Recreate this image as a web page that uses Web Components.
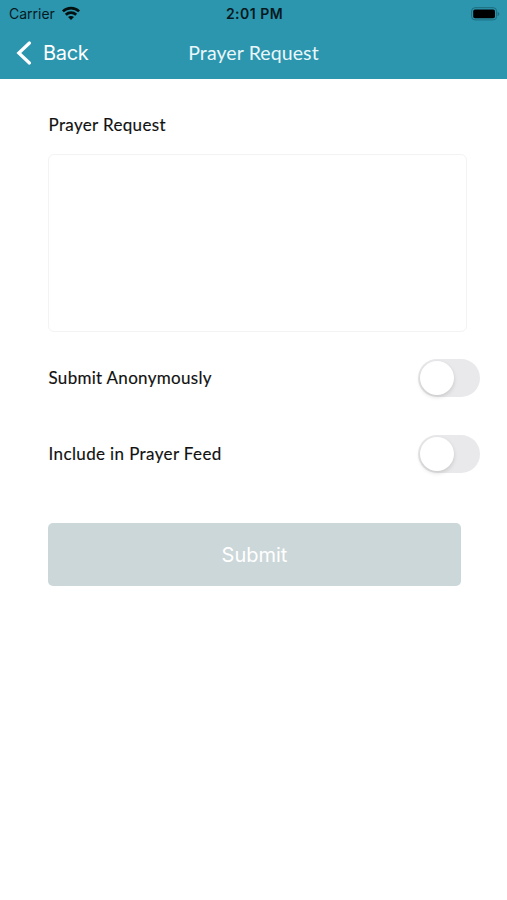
<!DOCTYPE html>
<html lang="en">
<head>
<meta charset="utf-8">
<meta name="viewport" content="width=device-width, initial-scale=1">
<title>Prayer Request</title>
<style>
  body {
    margin: 0;
    background: #fff;
    color: #111;
    font-family: Lato, "Open Sans", sans-serif;
  }
</style>
</head>
<body>
<prayer-app>
  <status-bar carrier="Carrier" time="2:01 PM"></status-bar>
  <nav-bar back="Back">Prayer Request</nav-bar>
  <request-form>
    <text-area-field label="Prayer Request"></text-area-field>
    <toggle-row style="--spacing: 0.3px">Submit Anonymously</toggle-row>
    <toggle-row style="--spacing: 0.38px">Include in Prayer Feed</toggle-row>
    <submit-button>Submit</submit-button>
  </request-form>
</prayer-app>
<script>
class BaseElement extends HTMLElement {
  constructor() {
    super();
    this.attachShadow({ mode: 'open' });
    this.shadowRoot.innerHTML = this.render();
  }

  get select() {
    return this.shadowRoot.querySelector.bind(this.shadowRoot);
  }
}

class PrayerApp extends BaseElement {
  render() {
    return /*html*/`
      <style>
        :host { display: flex; flex-direction: column; min-height: 900px; }
      </style>
      <slot></slot>
    `;
  }
}

class StatusBar extends BaseElement {
  render() {
    return /*html*/`
      <style>
        :host {
          display: grid;
          grid-template-columns: 1fr auto 1fr;
          align-items: center;
          box-sizing: border-box;
          height: 27px;
          padding: 0 7px 0 9px;
          background: #2c96ae;
          color: #06191e;
          font-family: Inter, sans-serif;
          font-size: 14px;
        }
        div { display: flex; align-items: center; gap: 7px; }
        .carrier { letter-spacing: 0; }
        .time { font-weight: 600; letter-spacing: 0.48px; }
        .battery { justify-content: flex-end; }
        svg { display: block; }
        .wifi { margin-top: -2px; }
      </style>
      <div>
        <span class="carrier">${this.getAttribute('carrier')}</span>
        <svg class="wifi" width="18" height="14" viewBox="0 0 18 14" fill="none" stroke="#04100f" stroke-width="2.7">
          <path d="M0.9 5.4C5.4 0.9 12.6 0.9 17.1 5.4"/>
          <path d="M3.8 8.8C6.7 6 11.3 6 14.2 8.8"/>
          <path d="M9 14L6 11C7.6 9.5 10.4 9.5 12 11Z" fill="#04100f" stroke="none"/>
        </svg>
      </div>
      <span class="time">${this.getAttribute('time')}</span>
      <div class="battery">
        <svg width="29" height="14" viewBox="0 0 29 14">
          <rect x="0.6" y="0.7" width="25" height="12.2" rx="3.4" fill="none" stroke="#1e6c7e"/>
          <rect x="2.2" y="2.4" width="21.8" height="8.8" rx="1.8" fill="#000"/>
          <path d="M26.7 4.7C28.8 5.5 28.8 8.2 26.7 9Z" fill="#1e6c7e"/>
        </svg>
      </div>
    `;
  }
}

class NavBar extends BaseElement {
  render() {
    return /*html*/`
      <style>
        :host {
          display: grid;
          grid-template-columns: 1fr auto 1fr;
          align-items: center;
          box-sizing: border-box;
          height: 52px;
          padding: 0 16px;
          background: #2c96ae;
          color: #fff;
        }
        button {
          display: flex;
          align-items: center;
          gap: 11px;
          padding: 0;
          border: 0;
          background: transparent;
          color: #fff;
          font: 20px Inter, sans-serif;
          letter-spacing: -0.3px;
        }
        h1 {
          margin: 0 0 2px;
          font-size: 19.5px;
          font-weight: 400;
          letter-spacing: 0.1px;
          color: #e9f7fa;
        }
      </style>
      <button>
        <svg width="16" height="24" viewBox="0 0 16 24" fill="none" stroke="#fff" stroke-width="3.2" stroke-linecap="round">
          <path d="M13.4 2L2.8 12L13.4 22"/>
        </svg>
        <span>${this.getAttribute('back')}</span>
      </button>
      <h1><slot></slot></h1>
    `;
  }
}

class RequestForm extends BaseElement {
  render() {
    return /*html*/`
      <style>
        :host {
          display: flex;
          flex-direction: column;
          padding: 36px 27px 0 48px;
        }
      </style>
      <slot></slot>
    `;
  }
}

class TextAreaField extends BaseElement {
  render() {
    return /*html*/`
      <style>
        :host { display: block; margin: 0 13px 27px 0; }
        label {
          display: block;
          height: 20px;
          margin-bottom: 19px;
          padding-left: 0.5px;
          font-size: 17px;
          line-height: 20px;
          letter-spacing: 0.35px;
          -webkit-text-stroke: 0.15px;
        }
        textarea {
          display: block;
          box-sizing: border-box;
          width: 100%;
          height: 178px;
          border: 1px solid #f3f3f3;
          border-radius: 6px;
          resize: none;
          font: inherit;
        }
      </style>
      <label for="text">${this.getAttribute('label')}</label>
      <textarea id="text"></textarea>
    `;
  }
}

class ToggleRow extends BaseElement {
  constructor() {
    super();
    this.select('button').onclick = () => this.toggleAttribute('on');
  }

  render() {
    return /*html*/`
      <style>
        :host {
          display: flex;
          align-items: center;
          justify-content: space-between;
          height: 38px;
          margin-bottom: 38px;
          font-size: 17px;
          letter-spacing: var(--spacing, 0);
          -webkit-text-stroke: 0.15px;
        }
        span { padding: 0 0 2px 0.5px; }
        button {
          display: flex;
          width: 62px;
          height: 38px;
          padding: 2px;
          border: 0;
          border-radius: 19px;
          background: #e9e9eb;
        }
        button::before {
          content: '';
          width: 34px;
          height: 34px;
          border-radius: 50%;
          background: #fff;
          box-shadow: 0 2px 4px rgba(0, 0, 0, 0.14);
        }
        :host([on]) button { justify-content: flex-end; background: #34c759; }
      </style>
      <span><slot></slot></span>
      <button role="switch" aria-label="Toggle"></button>
    `;
  }
}

class SubmitButton extends BaseElement {
  render() {
    return /*html*/`
      <style>
        :host { display: block; margin: 12px 19px 0 0; }
        button {
          display: block;
          width: 100%;
          height: 63px;
          padding: 0;
          border: 0;
          border-radius: 5px;
          background: #ccd7d9;
          color: #fff;
          font: 20px Inter, sans-serif;
        }
      </style>
      <button><slot></slot></button>
    `;
  }
}

window.customElements.define('prayer-app', PrayerApp);
window.customElements.define('status-bar', StatusBar);
window.customElements.define('nav-bar', NavBar);
window.customElements.define('request-form', RequestForm);
window.customElements.define('text-area-field', TextAreaField);
window.customElements.define('toggle-row', ToggleRow);
window.customElements.define('submit-button', SubmitButton);
</script>
</body>
</html>
